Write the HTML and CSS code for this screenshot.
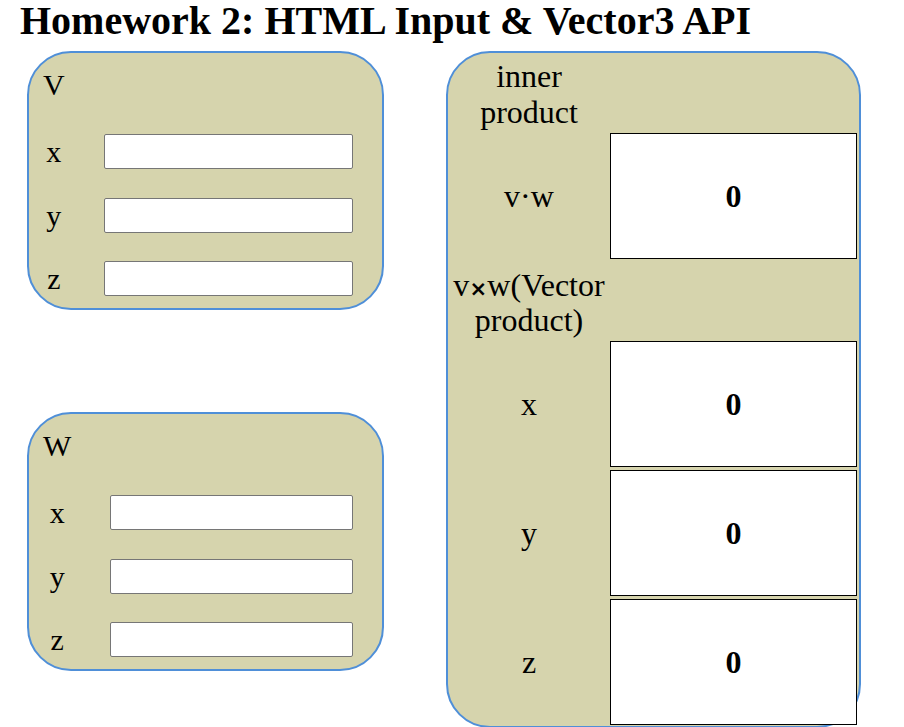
FILE: index.html
```html
<!DOCTYPE html>
<html lang="en">
<head>
<meta charset="utf-8">
<title>Homework 2</title>
<link rel="stylesheet" href="styles.css">
</head>
<body>
<div class="page">
  <h1 class="title">Homework 2: HTML Input &amp; Vector3 API</h1>
  <div class="layout">
    <div class="inputs">
      <section class="vec-box">
        <div class="vec-grid">
          <div class="vec-name">V</div><div></div>
          <label class="axis">x</label><input class="field" type="text">
          <label class="axis">y</label><input class="field" type="text">
          <label class="axis">z</label><input class="field" type="text">
        </div>
      </section>
      <section class="vec-box">
        <div class="vec-grid">
          <div class="vec-name">W</div><div></div>
          <label class="axis">x</label><input class="field" type="text">
          <label class="axis">y</label><input class="field" type="text">
          <label class="axis">z</label><input class="field" type="text">
        </div>
      </section>
    </div>
    <section class="result-box">
      <div class="result-grid">
        <div class="r-label r-head">inner product</div><div></div>
        <div class="r-label">v·w</div><div class="r-value">0</div>
        <div class="r-label r-head2">v<span class="cross">×</span>w(Vector product)</div><div></div>
        <div class="r-label">x</div><div class="r-value">0</div>
        <div class="r-label">y</div><div class="r-value">0</div>
        <div class="r-label">z</div><div class="r-value">0</div>
      </div>
    </section>
  </div>
</div>
</body>
</html>
```
FILE: styles.css
```css
html, body {
  margin: 0;
  padding: 0;
  background: #ffffff;
}

body {
  font-family: "Liberation Serif", "Times New Roman", serif;
  color: #000;
}

.page {
  padding-left: 20px;
}

.title {
  margin: 0;
  padding-bottom: 4px;
  font-size: 40px;
  line-height: 41px;
  font-weight: bold;
  white-space: nowrap;
}

.layout {
  display: flex;
  align-items: flex-start;
  gap: 62px;
  margin-top: 6px;
  margin-left: 7px;
}

.inputs {
  display: flex;
  flex-direction: column;
  gap: 102px;
  width: 357px;
}

.vec-box {
  box-sizing: border-box;
  width: 357px;
  background: #d6d4ad;
  border: 2px solid #4f8fd8;
  border-radius: 44px;
  padding: 15px 29px 12px 14px;
}

.vec-grid {
  display: grid;
  grid-template-columns: auto 1fr;
  column-gap: 39px;
  row-gap: 28.5px;
  align-items: center;
}

.vec-name {
  font-size: 30px;
  line-height: 34px;
  text-align: center;
  margin-bottom: 3.5px;
}

.axis {
  font-size: 30px;
  line-height: 35px;
  text-align: center;
}

.field {
  box-sizing: border-box;
  display: block;
  width: 100%;
  height: 35px;
  margin: 0;
  padding: 0 4px;
  border: 1px solid #767676;
  border-radius: 2px;
  background: #fff;
  font-family: "Liberation Sans", Arial, sans-serif;
  font-size: 16px;
}

.result-box {
  box-sizing: border-box;
  width: 415px;
  height: 677px;
  background: #d6d4ad;
  border: 2px solid #4f8fd8;
  border-radius: 44px;
  padding: 5px 0 1px 0;
}

.result-grid {
  display: grid;
  grid-template-columns: 162px 247px;
  row-gap: 3px;
  align-items: center;
}

.r-label {
  font-size: 32px;
  line-height: 35px;
  text-align: center;
}

.r-head {
  line-height: 36px;
  padding: 0 12px;
}

.r-head2 {
  margin-top: 6px;
}

.cross {
  display: inline-block;
  width: 18px;
  text-align: center;
  font-family: "DejaVu Sans", sans-serif;
  font-weight: bold;
  font-size: 21px;
  line-height: 20px;
}

.r-value {
  box-sizing: border-box;
  height: 126px;
  background: #fff;
  border: 1px solid #000;
  display: flex;
  align-items: center;
  justify-content: center;
  font-size: 32px;
  font-weight: bold;
}
```
